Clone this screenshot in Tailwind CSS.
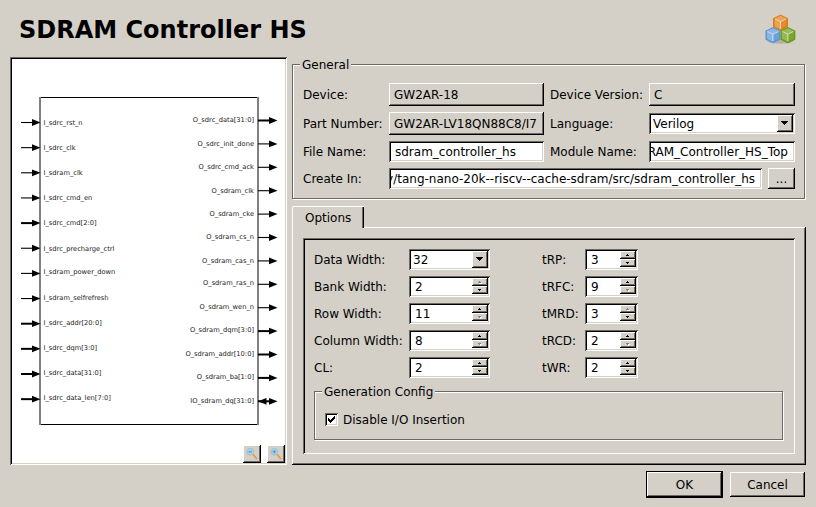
<!DOCTYPE html>
<html lang="en">
<head>
<meta charset="utf-8">
<title>SDRAM Controller HS</title>
<script src="https://cdn.jsdelivr.net/npm/@tailwindcss/browser@4"></script>
</head>
<body class="flex h-[507px] w-[816px] flex-col overflow-hidden bg-[#d4d0c8] font-['DejaVu_Sans',sans-serif] text-[12px] leading-[22px] whitespace-nowrap text-black">

<header class="flex h-[57px] shrink-0 justify-between pr-[19px] pl-[19px]">
  <h1 class="pt-[15px] text-[24px] leading-[30px] font-bold">SDRAM Controller HS</h1>
  <svg class="mt-[13px] h-[32px] w-[33px]" viewBox="0 0 33 32">
    <defs>
      <g id="cube" stroke-linejoin="round">
        <path d="M7.5 .8 14.3 4v8.2L7.5 15.6.7 12.200V4z" stroke="currentColor" stroke-width="1.3" fill="currentColor"/>
        <path d="M7.500 1.300 13.500 4.100 7.500 7.100 1.500 4.100z" fill="#fff" fill-opacity=".32"/>
        <path d="M1.500 4.700 7.500 7.500v7.200L1.500 11.700z" fill="#fff" fill-opacity=".3"/>
        <path d="M13.500 4.700 7.500 7.500v7.200l6-3z" fill="#fff" fill-opacity=".12"/>
        <path d="M1.900 4.500 7.500 7.200l5.600-2.700M7.500 7.200v7" fill="none" stroke="#fff" stroke-opacity=".65" stroke-width="1"/>
      </g>
    </defs>
    <ellipse cx="16.500" cy="28" rx="13" ry="2.800" fill="#000" fill-opacity=".15"/>
    <use href="#cube" x="9" y="1.500" class="text-[#e07b10]"/>
    <use href="#cube" x="1.400" y="14" class="text-[#5a94d6]"/>
    <use href="#cube" x="16.400" y="14" class="text-[#679a10]"/>
  </svg>
</header>

<main class="flex h-[408px] shrink-0 gap-[5px] pl-[10px]">

  <section class="relative h-[408px] w-[277px] bg-white shadow-[inset_1px_1px_#6b6964,inset_-1px_-1px_#fff,inset_2px_2px_#000,inset_-2px_-2px_#d4d0c8]">
    <svg id="diagram" class="block h-[408px] w-[277px]" viewBox="10 57 277 408" font-size="6.7" fill="#000">
      <path d="M39.5 97.5H258.5M39.5 424.5H258.5" stroke="#000" stroke-width="1"/>
      <path d="M40 97V425M258 97V425" stroke="#808080" stroke-width="2"/>
    </svg>
    <div class="absolute right-[2px] bottom-[2px] flex gap-[6px]">
      <button class="flex h-[18px] w-[18px] items-center justify-center bg-[#d4d0c8] shadow-[inset_-1px_-1px_#000,inset_1px_1px_#fff,inset_-2px_-2px_#6b6964]">
        <svg class="h-[12px] w-[12px]" viewBox="0 0 12 12"><path d="m7.200 6.700 3.300 3.700" stroke="#e8a040" stroke-width="2" stroke-linecap="round"/><circle cx="4.300" cy="3.800" r="3.400" fill="#9ad2f0" stroke="#b4bcc0"/><path d="M2.700 3.800h3.200" stroke="#4a96cc" stroke-width="1.100"/></svg>
      </button>
      <button class="flex h-[18px] w-[18px] items-center justify-center bg-[#d4d0c8] shadow-[inset_-1px_-1px_#000,inset_1px_1px_#fff,inset_-2px_-2px_#6b6964]">
        <svg class="h-[12px] w-[12px]" viewBox="0 0 12 12"><path d="m7.200 6.700 3.300 3.700" stroke="#e8a040" stroke-width="2" stroke-linecap="round"/><circle cx="4.300" cy="3.800" r="3.400" fill="#9ad2f0" stroke="#b4bcc0"/><path d="M2.700 3.800h3.200M4.300 2.200v3.200" stroke="#4a96cc" stroke-width="1.100"/></svg>
      </button>
    </div>
  </section>

  <div class="flex w-[514px] flex-col pt-[7px]">

    <section class="relative flex h-[135px] w-[513px] shrink-0 flex-col gap-[6px] border border-[#6b6964] pt-[18px] pl-[10px] shadow-[1px_1px_#fff,inset_1px_1px_#fff]">
      <h2 class="absolute top-[-11px] left-[7px] bg-[#d4d0c8] px-[2px]">General</h2>
      <div class="flex h-[23px] leading-[24px]">
        <span class="w-[86px]">Device:</span>
        <span class="h-[23px] w-[155px] pl-[5px] shadow-[inset_-1px_-1px_#000,inset_1px_1px_#fff,inset_-2px_-2px_#6b6964]">GW2AR-18</span>
        <span class="ml-[6px] w-[99px]">Device Version:</span>
        <span class="h-[23px] w-[146px] pl-[5px] shadow-[inset_-1px_-1px_#000,inset_1px_1px_#fff,inset_-2px_-2px_#6b6964]">C</span>
      </div>
      <div class="flex h-[23px] leading-[24px]">
        <span class="w-[86px]">Part Number:</span>
        <span class="h-[23px] w-[155px] pl-[5px] shadow-[inset_-1px_-1px_#000,inset_1px_1px_#fff,inset_-2px_-2px_#6b6964]">GW2AR-LV18QN88C8/I7</span>
        <span class="ml-[6px] w-[99px]">Language:</span>
        <div class="mt-[1px] flex h-[21px] w-[146px] justify-between bg-white p-[2px] pl-[4px] leading-[18px] shadow-[inset_1px_1px_#6b6964,inset_-1px_-1px_#fff,inset_2px_2px_#000,inset_-2px_-2px_#d4d0c8]">
          <span>Verilog</span>
          <span class="flex h-[17px] w-[16px] items-center justify-center bg-[#d4d0c8] pr-[1px] pb-[1px] shadow-[inset_-1px_-1px_#000,inset_1px_1px_#fff,inset_-2px_-2px_#6b6964]"><svg class="h-[4px] w-[7px]" viewBox="0 0 7 4"><path d="M0 0h7v1H6v1H5v1H4v1H3V3H2V2H1V1H0z"/></svg></span>
        </div>
      </div>
      <div class="flex h-[21px]">
        <span class="w-[86px]">File Name:</span>
        <span class="h-[21px] w-[155px] bg-white pl-[6px] shadow-[inset_1px_1px_#6b6964,inset_-1px_-1px_#fff,inset_2px_2px_#000,inset_-2px_-2px_#d4d0c8]">sdram_controller_hs</span>
        <span class="ml-[6px] w-[99px]">Module Name:</span>
        <div class="h-[21px] w-[146px] bg-white px-[2px] shadow-[inset_1px_1px_#6b6964,inset_-1px_-1px_#fff,inset_2px_2px_#000,inset_-2px_-2px_#d4d0c8]"><div class="flex justify-end overflow-hidden pr-[5px]"><span>RAM_Controller_HS_Top</span></div></div>
      </div>
      <div class="flex h-[21px]">
        <span class="w-[86px]">Create In:</span>
        <div class="h-[21px] w-[373px] bg-white px-[2px] shadow-[inset_1px_1px_#6b6964,inset_-1px_-1px_#fff,inset_2px_2px_#000,inset_-2px_-2px_#d4d0c8]"><div class="flex justify-end overflow-hidden pr-[5px]"><span>y/tang-nano-20k--riscv--cache-sdram/src/sdram_controller_hs</span></div></div>
        <button class="ml-[6px] h-[21px] w-[27px] pt-[1px] text-center leading-[20px] shadow-[inset_-1px_-1px_#000,inset_1px_1px_#fff,inset_-2px_-2px_#6b6964]">...</button>
      </div>
    </section>

    <div class="relative mt-[7px] mb-[-1px] h-[22px] w-[72px] shrink-0 rounded-tl-[2px] border-t border-l border-white bg-[#d4d0c8] pl-[12px] leading-[22px] shadow-[inset_-1px_0_#000,inset_-2px_0_#6b6964]">Options</div>
    <section class="h-[238px] w-[514px] shrink-0 pt-[11px] pl-[11px] shadow-[inset_-1px_-1px_#000,inset_1px_1px_#fff,inset_-2px_-2px_#6b6964]">
      <div class="h-[216px] w-[492px] pt-[11px] pl-[11px] shadow-[inset_1px_1px_#6b6964,inset_-1px_-1px_#fff,inset_2px_2px_#000,inset_-2px_-2px_#d4d0c8]">
        <div class="flex">
          <div id="widths" class="flex w-[228px] flex-col gap-[6px]">
            <div class="flex h-[21px]">
              <span class="w-[95px]">Data Width:</span>
              <div class="flex h-[21px] w-[81px] justify-between bg-white p-[2px] pl-[4px] leading-[18px] shadow-[inset_1px_1px_#6b6964,inset_-1px_-1px_#fff,inset_2px_2px_#000,inset_-2px_-2px_#d4d0c8]">
                <span>32</span>
                <span class="flex h-[17px] w-[16px] items-center justify-center bg-[#d4d0c8] pr-[1px] pb-[1px] shadow-[inset_-1px_-1px_#000,inset_1px_1px_#fff,inset_-2px_-2px_#6b6964]"><svg class="h-[4px] w-[7px]" viewBox="0 0 7 4"><path d="M0 0h7v1H6v1H5v1H4v1H3V3H2V2H1V1H0z"/></svg></span>
              </div>
            </div>
          </div>
          <div id="timings" class="flex flex-col gap-[6px]"></div>
        </div>

        <section class="relative mt-[13px] h-[49px] w-[469px] border border-[#6b6964] pt-[17px] pl-[10px] shadow-[1px_1px_#fff,inset_1px_1px_#fff]">
          <h2 class="absolute top-[-11px] left-[7px] bg-[#d4d0c8] px-[2px]">Generation Config</h2>
          <label class="flex h-[22px] items-start gap-[5px]">
            <svg class="mt-[4px] h-[13px] w-[13px] bg-white shadow-[inset_1px_1px_#6b6964,inset_-1px_-1px_#fff,inset_2px_2px_#000,inset_-2px_-2px_#d4d0c8]" viewBox="0 0 13 13"><path d="M3 5h1v1h1v1h1V6h1V5h1V4h1V3h1v3H9v1H8v1H7v1H6v1H5V9H4V8H3z"/></svg>
            <span>Disable I/O Insertion</span>
          </label>
        </section>
      </div>
    </section>
  </div>
</main>

<footer class="flex items-start justify-end gap-[7px] pt-[6px] pr-[11px]">
  <button class="h-[27px] w-[77px] border border-black pt-[1px] text-center leading-[24px] shadow-[inset_-1px_-1px_#000,inset_1px_1px_#fff,inset_-2px_-2px_#6b6964]">OK</button>
  <button class="mt-[1px] h-[25px] w-[75px] pt-[1px] text-center leading-[24px] shadow-[inset_-1px_-1px_#000,inset_1px_1px_#fff,inset_-2px_-2px_#6b6964]">Cancel</button>
</footer>

<script>
  // Port diagram: [name, label centre y, bus?]
  const inputs = [['I_sdrc_rst_n',122.7],['I_sdrc_clk',147.7],['I_sdram_clk',172.7],['I_sdrc_cmd_en',197.7],['I_sdrc_cmd[2:0]',222.7,1],['I_sdrc_precharge_ctrl',248.7],['I_sdram_power_down',271.7],['I_sdram_selfrefresh',297.7],['I_sdrc_addr[20:0]',322.7,1],['I_sdrc_dqm[3:0]',347.7,1],['I_sdrc_data[31:0]',372.7,1],['I_sdrc_data_len[7:0]',397.7,1]];
  const outputs = [['O_sdrc_data[31:0]',119.7,1],['O_sdrc_init_done',143.7],['O_sdrc_cmd_ack',166.7],['O_sdram_clk',190.7],['O_sdram_cke',213.7],['O_sdram_cs_n',236.7],['O_sdram_cas_n',260.7],['O_sdram_ras_n',282.7],['O_sdram_wen_n',306.7],['O_sdram_dqm[3:0]',329.7,1],['O_sdram_addr[10:0]',353.7,1],['O_sdram_ba[1:0]',376.7,1],['IO_sdram_dq[31:0]',400.7,1]];
  const arrow = (x, y, bus) => `<path d="M${x} ${y}h12" stroke="#000" stroke-width="${bus ? 2 : 1.1}"/><path d="M${x + 11} ${y - 3.4}l8.500 3.400l-8.500 3.400z"/>`;
  let ports = '';
  inputs.forEach(([name, y, bus], i) => {
    ports += arrow(21, 122.5 + 25.15 * i, bus) + `<text x="43.5" y="${Math.round(y + 2)}" fill="#1c1c1c">${name}</text>`;
  });
  outputs.forEach(([name, y, bus], i) => {
    const a = 120.5 + 23.4 * i;
    ports += arrow(258, a, bus) + `<text x="254" y="${Math.round(y + 2)}" fill="#1c1c1c" text-anchor="end">${name}</text>`;
    if (name.startsWith('IO')) ports += `<path d="M266.5 ${a - 3.4}l-8.500 3.400l8.500 3.400z"/>`;
  });
  document.getElementById('diagram').insertAdjacentHTML('beforeend', ports);

  // Disabled step arrows are grey with a white highlight below and to the right.
  const stepButton = (d, on) => `<span class="flex h-[8px] w-[16px] items-center justify-center bg-[#d4d0c8] pr-[1px] shadow-[inset_-1px_-1px_#000,inset_1px_1px_#fff,inset_-2px_-2px_#6b6964]"><svg class="h-[2px] w-[3px] overflow-visible" viewBox="0 0 3 2">${on ? '' : `<path fill="#fff" transform="translate(1 1)" d="${d}"/>`}<path fill="${on ? '#000' : '#808080'}" d="${d}"/></svg></span>`;
  const spinRow = (label, value, up, down, labelClass, boxClass) => `<div class="flex h-[21px]"><span class="${labelClass}">${label}</span><div class="flex h-[21px] justify-between bg-white p-[2px] pl-[6px] leading-[18px] shadow-[inset_1px_1px_#6b6964,inset_-1px_-1px_#fff,inset_2px_2px_#000,inset_-2px_-2px_#d4d0c8] ${boxClass}"><span>${value}</span><span class="flex flex-col">${stepButton('M1 0h1v1h1v1H0V1h1z', up)}${stepButton('M0 0h3v1H2v1H1V1H0z', down)}</span></div></div>`;
  document.getElementById('widths').insertAdjacentHTML('beforeend',
    [['Bank Width:',2,0,1],['Row Width:',11,1,0],['Column Width:',8,1,0],['CL:',2,1,1]].map(r => spinRow(...r, 'w-[95px]', 'w-[81px]')).join(''));
  document.getElementById('timings').innerHTML =
    [['tRP:',3,1,1],['tRFC:',9,1,0],['tMRD:',3,0,1],['tRCD:',2,1,0],['tWR:',2,1,1]].map(r => spinRow(...r, 'w-[43px]', 'w-[53px]')).join('');
</script>
</body>
</html>
